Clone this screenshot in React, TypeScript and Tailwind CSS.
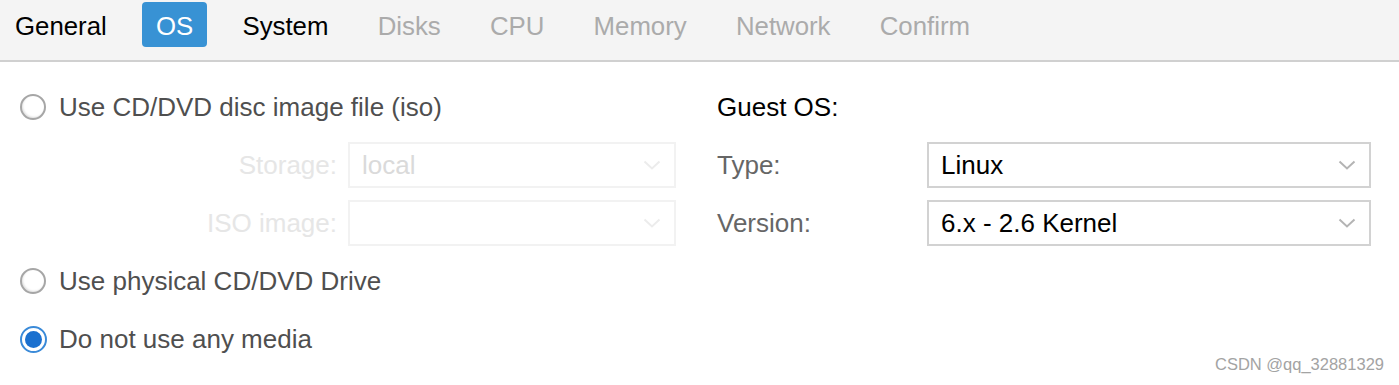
import React from "react";

const font = { fontFamily: '"Liberation Sans", Arial, sans-serif' };

function Chevron({ color }: { color: string }) {
  return (
    <svg width="18" height="10" viewBox="0 0 18 10" fill="none">
      <path d="M1.5 1.5 L9 8.5 L16.5 1.5" stroke={color} strokeWidth="2" />
    </svg>
  );
}

function Radio({ checked }: { checked?: boolean }) {
  if (checked) {
    return (
      <div className="w-[27px] h-[27px] rounded-full border-2 border-[#3a8ad8] bg-white flex items-center justify-center shrink-0">
        <div className="w-[17px] h-[17px] rounded-full bg-[#1a70cf]" />
      </div>
    );
  }
  return (
    <div className="w-[26px] h-[26px] rounded-full border-[2.5px] border-[#a6a6a6] bg-white shadow-[inset_1px_-1px_2px_rgba(0,0,0,0.12)] shrink-0" />
  );
}

function Field({ value, disabled }: { value: string; disabled?: boolean }) {
  return (
    <div
      className={
        "h-[46px] border-2 flex items-center justify-between pl-[12px] pr-[13px] " +
        (disabled ? "border-[#f2f2f2] text-[#dadada]" : "border-[#d2d2d2] text-[#000000]")
      }
    >
      <span className="text-[26px]">{value}</span>
      <Chevron color={disabled ? "#ececec" : "#b4b4b4"} />
    </div>
  );
}

export default function App() {
  const tabs: { label: string; state: "done" | "active" | "disabled" }[] = [
    { label: "General", state: "done" },
    { label: "OS", state: "active" },
    { label: "System", state: "done" },
    { label: "Disks", state: "disabled" },
    { label: "CPU", state: "disabled" },
    { label: "Memory", state: "disabled" },
    { label: "Network", state: "disabled" },
    { label: "Confirm", state: "disabled" },
  ];

  return (
    <div className="relative w-[1399px] h-[385px] overflow-hidden bg-white" style={font}>
      <div className="h-[62px] bg-[#f4f4f4] border-b-2 border-[#d0d0d0] flex items-start pt-[2px] pl-[1px] gap-[21.2px]">
        {tabs.map((t) => (
          <div
            key={t.label}
            className={
              "h-[45px] px-[14px] pt-[3px] flex items-center text-[25.8px] rounded-[4px] " +
              (t.state === "active"
                ? "bg-[#3892d4] text-white"
                : t.state === "done"
                ? "text-black"
                : "text-[#ababab]")
            }
          >
            {t.label}
          </div>
        ))}
      </div>

      <div className="flex pt-[16px]">
        <div className="w-[700px] pl-[20px] flex flex-col">
          <div className="h-[58px] flex items-center gap-[13px]">
            <Radio />
            <span className="text-[26px] text-[#4f4f4f]">Use CD/DVD disc image file (iso)</span>
          </div>
          <div className="h-[58px] flex items-center">
            <span className="w-[317px] text-right text-[26px] text-[#e6e6e6]">Storage:</span>
            <div className="ml-[11px] w-[328px]">
              <Field value="local" disabled />
            </div>
          </div>
          <div className="h-[58px] flex items-center">
            <span className="w-[317px] text-right text-[26px] text-[#e6e6e6]">ISO image:</span>
            <div className="ml-[11px] w-[328px]">
              <Field value="" disabled />
            </div>
          </div>
          <div className="h-[58px] flex items-center gap-[13px]">
            <Radio />
            <span className="text-[26px] text-[#4f4f4f]">Use physical CD/DVD Drive</span>
          </div>
          <div className="h-[58px] flex items-center gap-[12px]">
            <Radio checked />
            <span className="text-[26px] text-[#4f4f4f]">Do not use any media</span>
          </div>
        </div>

        <div className="flex-1 pl-[17px] flex flex-col">
          <div className="h-[58px] flex items-center">
            <span className="text-[26px] text-black">Guest OS:</span>
          </div>
          <div className="h-[58px] flex items-center">
            <span className="w-[210px] text-[26px] text-[#666666]">Type:</span>
            <div className="w-[444px]">
              <Field value="Linux" />
            </div>
          </div>
          <div className="h-[58px] flex items-center">
            <span className="w-[210px] text-[26px] text-[#666666]">Version:</span>
            <div className="w-[444px]">
              <Field value="6.x - 2.6 Kernel" />
            </div>
          </div>
        </div>
      </div>

      <div className="absolute right-[15px] bottom-[8px] text-[16.5px] text-[#a3a3a3]">
        CSDN @qq_32881329
      </div>
    </div>
  );
}
